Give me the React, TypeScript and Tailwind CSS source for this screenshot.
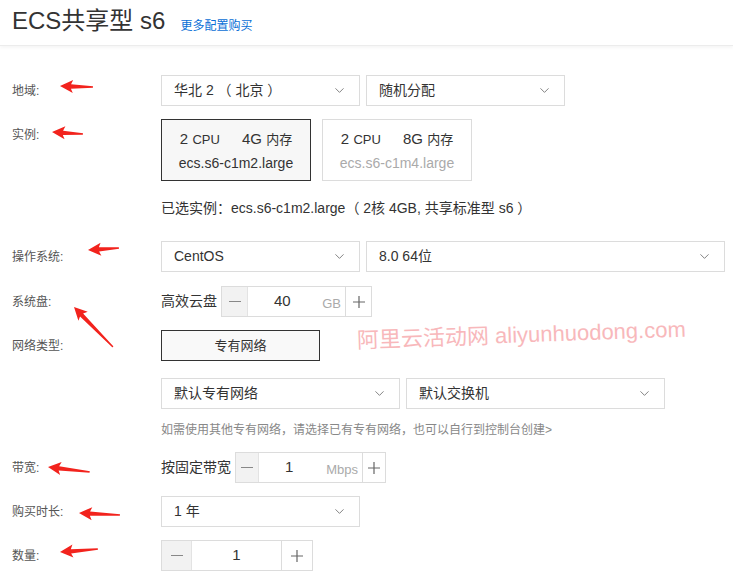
import React from 'react'
import { ChevronDown } from 'lucide-react'

const FONT = '"Liberation Sans", "Noto Sans CJK SC", Arial, sans-serif'

interface SelectBoxProps {
  value: string
  width: string
}

const SelectBox: React.FC<SelectBoxProps> = ({ value, width }) => (
  <div
    className={`${width} h-[31px] border border-[#dcdcdc] bg-white flex items-center justify-between pl-3 pr-3 text-[14px] text-[#333]`}
  >
    <span>{value}</span>
    <ChevronDown className="w-[15px] h-[15px] text-[#666]" strokeWidth={1.3} />
  </div>
)

interface StepperProps {
  value: string
  unit?: string
  minusW: string
  midW: string
  plusW: string
  valueCls: string
}

const Stepper: React.FC<StepperProps> = ({ value, unit, minusW, midW, plusW, valueCls }) => (
  <div className="flex h-[31px] border border-[#dcdcdc] bg-white">
    <div className={`${minusW} bg-[#f2f2f2] border-r border-[#e3e3e3] flex items-center justify-center`}>
      <div className="w-[12px] h-[1.5px] bg-[#888]" />
    </div>
    <div className={`${midW} relative flex items-center text-[15px] text-[#333]`}>
      <span className={valueCls}>{value}</span>
      {unit && <span className="absolute right-[4px] top-[7px] text-[13px] text-[#aaa]">{unit}</span>}
    </div>
    <div className={`${plusW} border-l border-[#dcdcdc] flex items-center justify-center text-[#555]`}>
      <svg width="14" height="14" viewBox="0 0 14 14">
        <path d="M7 1v12M1 7h12" stroke="#666" strokeWidth="1.2" />
      </svg>
    </div>
  </div>
)

const Label: React.FC<{ text: string }> = ({ text }) => (
  <div className="w-[161px] shrink-0 h-[31px] pl-3 flex items-center text-[12px] text-[#555]">{text}</div>
)

// red hand-drawn arrows, tip first then tail
const arrows: Array<[number, number, number, number]> = [
  [60, 86, 93, 87],
  [52, 132, 83, 134],
  [88, 250, 119, 248],
  [74, 307, 113, 347],
  [48, 467, 90, 472],
  [79, 513, 120, 515],
  [60, 552, 98, 549],
]

const Arrow: React.FC<{ pts: [number, number, number, number] }> = ({ pts }) => {
  const [x1, y1, x2, y2] = pts
  const len = Math.hypot(x2 - x1, y2 - y1)
  const angle = (Math.atan2(y2 - y1, x2 - x1) * 180) / Math.PI
  return (
    <svg
      className="absolute"
      width={len}
      height={14}
      viewBox={`0 0 ${len} 14`}
      style={{ left: x1, top: y1 - 7, transform: `rotate(${angle}deg)`, transformOrigin: '0 7px' }}
    >
      <polygon
        points={`0,7 13,0.5 11,5 ${len},6.3 ${len},7.7 11,9.3 13,13.5`}
        fill="#f2231d"
      />
    </svg>
  )
}

export default function App() {
  return (
    <div className="relative w-[733px] h-[586px] bg-white overflow-hidden" style={{ fontFamily: FONT }}>
      <div className="h-[46px] border-b border-[#ececec] shadow-[0_2px_3px_rgba(0,0,0,0.04)] flex items-end pl-3 pb-[12px]">
        <span className="text-[24px] leading-none text-[#333]">ECS共享型 s6</span>
        <span className="ml-[15px] text-[12px] leading-none text-[#0a6fd6] mb-[1px]">更多配置购买</span>
      </div>

      <div className="flex flex-col">
        <div className="flex items-start mt-[29px]">
          <Label text="地域:" />
          <div className="flex gap-[6px]">
            <SelectBox value="华北 2 （ 北京 ）" width="w-[199px]" />
            <SelectBox value="随机分配" width="w-[199px]" />
          </div>
        </div>

        <div className="flex items-start mt-[13px]">
          <Label text="实例:" />
          <div className="flex gap-[11px]">
            <div className="w-[150px] h-[62px] border border-[#333] bg-[#f7f7f7] flex flex-col items-center justify-center text-[#333]">
              <div className="flex items-baseline gap-[22px] leading-none">
                <span><span className="text-[15px]">2</span> <span className="text-[13px]">CPU</span></span>
                <span><span className="text-[15px]">4G</span> <span className="text-[13px]">内存</span></span>
              </div>
              <div className="text-[14px] mt-[9px] leading-none">ecs.s6-c1m2.large</div>
            </div>
            <div className="w-[150px] h-[62px] border border-[#dcdcdc] bg-white flex flex-col items-center justify-center text-[#333]">
              <div className="flex items-baseline gap-[22px] leading-none">
                <span><span className="text-[15px]">2</span> <span className="text-[13px]">CPU</span></span>
                <span><span className="text-[15px]">8G</span> <span className="text-[13px]">内存</span></span>
              </div>
              <div className="text-[14px] mt-[9px] leading-none text-[#aaa]">ecs.s6-c1m4.large</div>
            </div>
          </div>
        </div>

        <div className="mt-[17px] pl-[161px] h-[20px] flex items-center text-[14px] text-[#333]">
          已选实例：ecs.s6-c1m2.large（ 2核 4GB, 共享标准型 s6 ）
        </div>

        <div className="flex items-start mt-[23px]">
          <Label text="操作系统:" />
          <div className="flex gap-[6px]">
            <SelectBox value="CentOS" width="w-[199px]" />
            <SelectBox value="8.0 64位" width="w-[359px]" />
          </div>
        </div>

        <div className="flex items-start mt-[14px]">
          <Label text="系统盘:" />
          <div className="flex items-center gap-[4px]">
            <span className="text-[14px] text-[#333]">高效云盘</span>
            <Stepper value="40" unit="GB" minusW="w-[26px]" midW="w-[97px]" plusW="w-[26px]" valueCls="ml-[26px]" />
          </div>
        </div>

        <div className="flex items-start mt-[13px]">
          <Label text="网络类型:" />
          <div className="w-[159px] h-[31px] border border-[#333] bg-[#f9f9f9] flex items-center justify-center text-[13px] text-[#333]">
            专有网络
          </div>
        </div>

        <div className="flex mt-[17px] pl-[161px] gap-[6px]">
          <SelectBox value="默认专有网络" width="w-[239px]" />
          <SelectBox value="默认交换机" width="w-[259px]" />
        </div>

        <div className="mt-[12px] pl-[161px] h-[18px] flex items-center text-[12px] text-[#888]">
          如需使用其他专有网络，请选择已有专有网络，也可以自行到控制台创建&gt;
        </div>

        <div className="flex items-start mt-[13px]">
          <Label text="带宽:" />
          <div className="flex items-center gap-[4px]">
            <span className="text-[14px] text-[#333]">按固定带宽</span>
            <Stepper value="1" unit="Mbps" minusW="w-[23px]" midW="w-[103px]" plusW="w-[23px]" valueCls="ml-[26px]" />
          </div>
        </div>

        <div className="flex items-start mt-[13px]">
          <Label text="购买时长:" />
          <SelectBox value="1 年" width="w-[199px]" />
        </div>

        <div className="flex items-start mt-[13px]">
          <Label text="数量:" />
          <Stepper value="1" minusW="w-[30px]" midW="w-[89px]" plusW="w-[31px]" valueCls="mx-auto" />
        </div>
      </div>

      {arrows.map((a, i) => (
        <Arrow key={i} pts={a} />
      ))}

      <div className="absolute left-[357px] top-[330px] origin-left -rotate-2 text-[22px] leading-none text-[#f8b8bb] whitespace-nowrap">
        阿里云活动网 aliyunhuodong.com
      </div>
    </div>
  )
}
